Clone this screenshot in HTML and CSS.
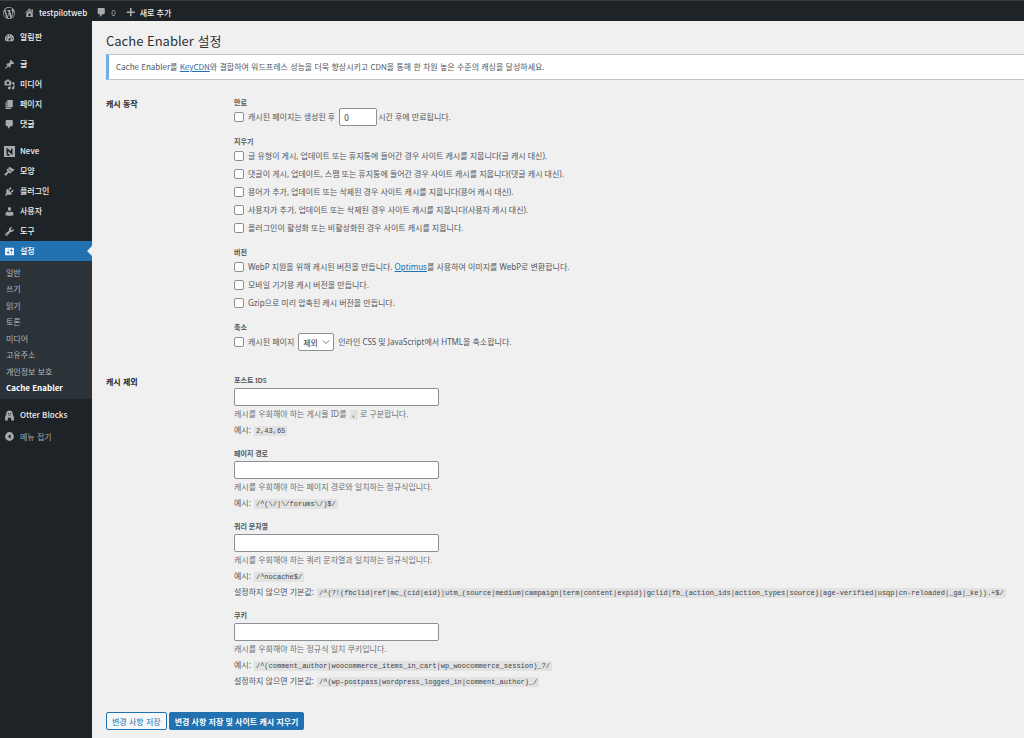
FILE: index.html
```html
<!DOCTYPE html>
<html lang="ko">
<head>
<meta charset="UTF-8">
<meta name="viewport" content="width=device-width, initial-scale=1.0">
<title>Cache Enabler 설정</title>
<link rel="stylesheet" href="styles.css">
</head>
<body>

<div class="adminbar">
  <a href="#" class="bar-logo" aria-label="WordPress"><svg class="icon logo" viewBox="0 0 20 20"><path d="M20 10c0-5.51-4.49-10-10-10C4.48 0 0 4.49 0 10c0 5.52 4.48 10 10 10 5.51 0 10-4.48 10-10zM7.78 15.37L4.37 6.22c.55-.02 1.17-.08 1.17-.08.5-.06.44-1.13-.06-1.11 0 0-1.45.11-2.37.11-.18 0-.37 0-.58-.01C4.12 2.69 6.87 1.11 10 1.11c2.33 0 4.45.87 6.05 2.34-.68-.11-1.65.39-1.65 1.58 0 .74.45 1.36.9 2.1.35.61.55 1.36.55 2.46 0 1.49-1.4 5-1.4 5l-3.03-8.37c.54-.02.82-.17.82-.17.5-.05.44-1.25-.06-1.22 0 0-1.44.12-2.38.12-.87 0-2.33-.12-2.33-.12-.5-.03-.56 1.2-.06 1.22l.92.08 1.26 3.41zM17.41 10c.24-.64.74-1.87.43-4.25.7 1.29 1.05 2.71 1.05 4.25 0 3.29-1.73 6.24-4.4 7.78.97-2.59 1.94-5.2 2.92-7.78zM6.1 18.09C3.12 16.65 1.11 13.53 1.11 10c0-1.3.23-2.48.72-3.59C3.25 10.3 4.67 14.2 6.1 18.09zm4.03-6.63l2.58 6.98c-.86.29-1.76.45-2.71.45-.79 0-1.57-.11-2.29-.33.81-2.38 1.62-4.74 2.42-7.1z"/></svg></a>
  <a href="#"><svg class="icon" viewBox="0 0 20 20"><path d="M16 8.5l1.53 1.53-1.06 1.06L10 4.6l-6.47 6.47-1.06-1.06L10 2.4l4 4V4h2v4.5zm-6-2.46l6 5.99V18H4v-5.97zM12 17v-5H8v5h4z"/></svg>testpilotweb</a>
  <a href="#" class="bar-comments"><svg class="icon" viewBox="0 0 20 20"><path d="M5 2h9c1.1 0 2 .9 2 2v7c0 1.1-.9 2-2 2h-2l-5 5v-5H5c-1.1 0-2-.9-2-2V4c0-1.1.9-2 2-2z"/></svg>0</a>
  <a href="#"><svg class="icon" viewBox="0 0 20 20"><path d="M18 8v3h-6v6H9v-6H3V8h6V2h3v6z"/></svg>새로 추가</a>
</div>

<div class="wrapper">
  <div class="sidebar">
    <ul class="menu">
      <li><a href="#"><svg class="icon" viewBox="0 0 20 20"><path fill-rule="evenodd" d="M3.8 17h12.4A8 8 0 1 0 3.8 17zM10 5.2a1 1 0 1 1 0 2 1 1 0 0 1 0-2zM6 7a1 1 0 1 1 0 2 1 1 0 0 1 0-2zm8.6.2l-3 5.6a1.9 1.9 0 1 1-1.3-1zM4.5 11a1 1 0 1 1 0 2 1 1 0 0 1 0-2zm11 0a1 1 0 1 1 0 2 1 1 0 0 1 0-2z"/></svg>알림판</a></li>
    </ul>
    <ul class="menu">
      <li><a href="#"><svg class="icon" viewBox="0 0 20 20"><path d="M10.44 3.02l1.82-1.82 6.36 6.35-1.83 1.82c-1.05-.68-2.48-.57-3.41.36l-.75.75c-.92.93-1.04 2.35-.35 3.41l-1.83 1.82-2.41-2.41-2.8 2.79c-.42.42-3.38 2.71-3.8 2.29s1.86-3.39 2.28-3.81l2.79-2.79L4.1 9.36l1.83-1.82c1.05.69 2.48.57 3.4-.36l.75-.75c.93-.92 1.05-2.35.36-3.41z"/></svg>글</a></li>
      <li><a href="#"><svg class="icon" viewBox="0 0 20 20"><path d="M13 11V4c0-.55-.45-1-1-1h-1.67L9 1H5L3.67 3H2c-.55 0-1 .45-1 1v7c0 .55.45 1 1 1h10c.55 0 1-.45 1-1zM7 4.5c1.38 0 2.5 1.12 2.5 2.5S8.38 9.5 7 9.5 4.5 8.38 4.5 7 5.62 4.5 7 4.5zM14 6h5v10.5c0 1.38-1.12 2.5-2.5 2.5S14 17.88 14 16.5s1.12-2.5 2.5-2.5c.17 0 .34.02.5.05V9h-3V6zm-4 8.05V13h2v3.5c0 1.38-1.12 2.5-2.5 2.5S7 17.88 7 16.5 8.12 14 9.5 14c.17 0 .34.02.5.05z"/></svg>미디어</a></li>
      <li><a href="#"><svg class="icon" viewBox="0 0 20 20"><path d="M6 15V2h10v13H6zm-1 1h8v2H3V5h2v11z"/></svg>페이지</a></li>
      <li><a href="#"><svg class="icon" viewBox="0 0 20 20"><path d="M5 2h9c1.1 0 2 .9 2 2v7c0 1.1-.9 2-2 2h-2l-5 5v-5H5c-1.1 0-2-.9-2-2V4c0-1.1.9-2 2-2z"/></svg>댓글</a></li>
    </ul>
    <ul class="menu">
      <li><a href="#"><svg class="icon" viewBox="0 0 20 20"><path d="M0 0h20v20H0z"/><path class="cut" d="M6 14V6l8 7V5M5 16h5"/></svg>Neve</a></li>
      <li><a href="#"><svg class="icon" viewBox="0 0 20 20"><path d="M14.48 11.06L7.41 3.99l1.5-1.5c.5-.56 2.3-.47 3.51.32 1.21.8 1.43 1.28 2.91 2.1 1.18.64 2.45 1.26 4.45.85zm-.71.71L6.7 4.7 4.93 6.47c-.39.39-.39 1.02 0 1.41l1.06 1.06c.39.39.39 1.03 0 1.42-.6.6-1.43 1.11-2.21 1.69-.35.26-.7.53-1.01.84C1.43 14.23.4 16.08 1.4 17.07c.99 1 2.84-.03 4.18-1.36.31-.31.58-.66.85-1.02.57-.78 1.08-1.61 1.69-2.21.39-.39 1.02-.39 1.41 0l1.06 1.06c.39.39 1.02.39 1.41 0z"/></svg>모양</a></li>
      <li><a href="#"><svg class="icon" viewBox="0 0 20 20"><path d="M13.11 4.36L9.87 7.6 8 5.73l3.24-3.24c.35-.34 1.05-.2 1.56.32.52.51.66 1.21.31 1.55zm-8 1.77l.91-1.12 9.01 9.01-1.19.84c-.71.71-2.63 1.16-3.82 1.16H6.14L4.9 17.26c-.59.59-1.54.59-2.12 0-.59-.58-.59-1.53 0-2.12l1.24-1.24v-3.88c0-1.13.4-3.19 1.09-3.89zm7.26 3.97l3.24-3.24c.34-.35 1.04-.21 1.55.31.52.51.66 1.21.31 1.55l-3.24 3.25z"/></svg>플러그인</a></li>
      <li><a href="#"><svg class="icon" viewBox="0 0 20 20"><path d="M10 9.25c-2.27 0-2.73-3.44-2.73-3.44C7 4.02 7.82 2 9.97 2c2.16 0 2.98 2.02 2.71 3.81 0 0-.41 3.44-2.68 3.44zm0 2.57L12.72 10c2.39 0 4.52 2.33 4.52 4.53v2.49s-3.65 1.13-7.24 1.13c-3.65 0-7.24-1.13-7.24-1.13v-2.49c0-2.25 1.94-4.48 4.47-4.48z"/></svg>사용자</a></li>
      <li><a href="#"><svg class="icon" viewBox="0 0 20 20"><path d="M16.68 9.77c-1.34 1.34-3.3 1.67-4.95.99l-5.41 6.52c-.99.99-2.59.99-3.58 0s-.99-2.59 0-3.57l6.52-5.42c-.68-1.65-.35-3.61.99-4.95 1.28-1.28 3.12-1.62 4.72-1.06l-2.89 2.89 2.82 2.82 2.86-2.87c.53 1.58.18 3.39-1.08 4.65zM3.81 16.21c.4.39 1.04.39 1.43 0 .4-.4.4-1.04 0-1.43-.39-.4-1.03-.4-1.43 0-.39.39-.39 1.03 0 1.43z"/></svg>도구</a></li>
      <li class="current"><a href="#"><svg class="icon" viewBox="0 0 20 20"><path d="M18 16V4c0-.55-.45-1-1-1H3c-.55 0-1 .45-1 1v12c0 .55.45 1 1 1h14c.55 0 1-.45 1-1zM8 11h1c.55 0 1 .45 1 1s-.45 1-1 1H8v1.500c0 .28-.22.5-.5.5s-.5-.22-.5-.5V13H6c-.55 0-1-.45-1-1s.45-1 1-1h1V5.500c0-.28.22-.5.5-.5s.5.22.5.5V11zm5-2h-1c-.55 0-1-.45-1-1s.45-1 1-1h1V5.500c0-.28.22-.5.5-.5s.5.22.5.5V7h1c.55 0 1 .45 1 1s-.45 1-1 1h-1v5.500c0 .28-.22.5-.5.5s-.5-.22-.5-.5V9z"/></svg>설정</a></li>
    </ul>
    <ul class="submenu">
      <li><a href="#">일반</a></li>
      <li><a href="#">쓰기</a></li>
      <li><a href="#">읽기</a></li>
      <li><a href="#">토론</a></li>
      <li><a href="#">미디어</a></li>
      <li><a href="#">고유주소</a></li>
      <li><a href="#">개인정보 보호</a></li>
      <li><a href="#" class="active">Cache Enabler</a></li>
    </ul>
    <ul class="menu">
      <li><a href="#"><svg class="icon" viewBox="0 0 20 20"><path fill-rule="evenodd" d="M4 7C4 3 6.500 1 10 1s6 2 6 6v2c1.500 1.500 2 3 2 5v5h-5v-5H7v5H2v-5c0-2 .5-3.500 2-5zm3-1.500v2h2v-2zm4 0v2h2v-2zM8 9.500l2 2 2-2z"/></svg>Otter Blocks</a></li>
    </ul>
    <button type="button" class="collapse"><svg class="icon" viewBox="0 0 20 20"><path fill-rule="evenodd" d="M10 2a8 8 0 1 1 0 16 8 8 0 0 1 0-16zm2 4l-5 4 5 4z"/></svg>메뉴 접기</button>
  </div>

  <div class="content">
    <h1>Cache Enabler 설정</h1>
    <div class="notice">
      <p>Cache Enabler를 <a href="#">KeyCDN</a>와 결합하여 워드프레스 성능을 더욱 향상시키고 CDN을 통해 한 차원 높은 수준의 캐싱을 달성하세요.</p>
    </div>

    <form>
      <div class="section">
        <h2>캐시 동작</h2>
        <div class="fields">
          <div class="group">
            <h3>만료</h3>
            <div class="row">
              <input type="checkbox" id="expires"><label for="expires">캐시된 페이지는 생성된 후</label>
              <input type="text" class="hours" id="hours" value="0"><label for="hours">시간 후에 만료됩니다.</label>
            </div>
          </div>
          <div class="group">
            <h3>지우기</h3>
            <div class="row"><input type="checkbox" id="c1"><label for="c1">글 유형이 게시, 업데이트 또는 휴지통에 들어간 경우 사이트 캐시를 지웁니다(글 캐시 대신).</label></div>
            <div class="row"><input type="checkbox" id="c2"><label for="c2">댓글이 게시, 업데이트, 스팸 또는 휴지통에 들어간 경우 사이트 캐시를 지웁니다(댓글 캐시 대신).</label></div>
            <div class="row"><input type="checkbox" id="c3"><label for="c3">용어가 추가, 업데이트 또는 삭제된 경우 사이트 캐시를 지웁니다(용어 캐시 대신).</label></div>
            <div class="row"><input type="checkbox" id="c4"><label for="c4">사용자가 추가, 업데이트 또는 삭제된 경우 사이트 캐시를 지웁니다(사용자 캐시 대신).</label></div>
            <div class="row"><input type="checkbox" id="c5"><label for="c5">플러그인이 활성화 또는 비활성화된 경우 사이트 캐시를 지웁니다.</label></div>
          </div>
          <div class="group">
            <h3>버전</h3>
            <div class="row"><input type="checkbox" id="v1"><label for="v1">WebP 지원을 위해 캐시된 버전을 만듭니다. <a href="#">Optimus</a>를 사용하여 이미지를 WebP로 변환합니다.</label></div>
            <div class="row"><input type="checkbox" id="v2"><label for="v2">모바일 기기용 캐시 버전을 만듭니다.</label></div>
            <div class="row"><input type="checkbox" id="v3"><label for="v3">Gzip으로 미리 압축된 캐시 버전을 만듭니다.</label></div>
          </div>
          <div class="group">
            <h3>축소</h3>
            <div class="row">
              <input type="checkbox" id="minify"><label for="minify">캐시된 페이지</label>
              <span class="select-box">
                <select id="inline"><option>제외</option><option>포함</option></select>
                <svg viewBox="0 0 10 10"><path d="M1 3l4 4 4-4"/></svg>
              </span>
              <label for="inline">인라인 CSS 및 JavaScript에서 HTML을 축소합니다.</label>
            </div>
          </div>
        </div>
      </div>

      <div class="section">
        <h2>캐시 제외</h2>
        <div class="fields">
          <div class="group">
            <h3><label for="ids">포스트 IDS</label></h3>
            <input type="text" class="regular" id="ids">
            <p class="description">캐시를 우회해야 하는 게시물 ID를 <code>,</code> 로 구분합니다.</p>
            <p>예시: <code>2,43,65</code></p>
          </div>
          <div class="group">
            <h3><label for="paths">페이지 경로</label></h3>
            <input type="text" class="regular" id="paths">
            <p class="description">캐시를 우회해야 하는 페이지 경로와 일치하는 정규식입니다.</p>
            <p>예시: <code>/^(\/|\/forums\/)$/</code></p>
          </div>
          <div class="group">
            <h3><label for="query">쿼리 문자열</label></h3>
            <input type="text" class="regular" id="query">
            <p class="description">캐시를 우회해야 하는 쿼리 문자열과 일치하는 정규식입니다.</p>
            <p>예시: <code>/^nocache$/</code></p>
            <p>설정하지 않으면 기본값: <code>/^(?!(fbclid|ref|mc_(cid|eid)|utm_(source|medium|campaign|term|content|expid)|gclid|fb_(action_ids|action_types|source)|age-verified|usqp|cn-reloaded|_ga|_ke)).+$/</code></p>
          </div>
          <div class="group">
            <h3><label for="cookies">쿠키</label></h3>
            <input type="text" class="regular" id="cookies">
            <p class="description">캐시를 우회해야 하는 정규식 일치 쿠키입니다.</p>
            <p>예시: <code>/^(comment_author|woocommerce_items_in_cart|wp_woocommerce_session)_?/</code></p>
            <p>설정하지 않으면 기본값: <code>/^(wp-postpass|wordpress_logged_in|comment_author)_/</code></p>
          </div>
        </div>
      </div>

      <div class="buttons">
        <button type="submit" class="button">변경 사항 저장</button>
        <button type="submit" class="button primary">변경 사항 저장 및 사이트 캐시 지우기</button>
      </div>
    </form>
  </div>
</div>

</body>
</html>
```

FILE: styles.css
```css
* {
  box-sizing: border-box;
}

body {
  margin: 0;
  min-height: 100vh;
  display: flex;
  flex-direction: column;
  font-family: "Noto Sans CJK KR", sans-serif;
  font-size: 8px;
  line-height: 16px;
  color: #50565c;
  background-color: #f0f0f0;
}

h1, h2, h3, p, ul {
  margin: 0;
  padding: 0;
}

ul {
  list-style: none;
}

a {
  color: #2271b1;
}

input, select, button {
  font-family: inherit;
  font-size: 8px;
  margin: 0;
}

.icon {
  width: 11px;
  height: 11px;
  flex: none;
  fill: #a7aaad;
}

/* top bar */
.adminbar {
  display: flex;
  align-items: center;
  gap: 9px;
  height: 21px;
  padding: 3px 3px 0;
  background-color: #1d2327;
  border-top: 1px solid #3a3f45;
}

.adminbar a {
  display: flex;
  align-items: center;
  gap: 4px;
  color: #f0f0f1;
  font-weight: 500;
  text-decoration: none;
}

.adminbar .bar-comments {
  color: #a7aaad;
  font-weight: 400;
}

.icon.logo {
  width: 12px;
  height: 12px;
}

.wrapper {
  display: flex;
  flex: 1;
}

/* left menu */
.sidebar {
  width: 92px;
  flex: none;
  padding-top: 6px;
  background-color: #1d2327;
}

.menu {
  margin-bottom: 7px;
}

.menu a,
.collapse {
  display: flex;
  align-items: center;
  gap: 5px;
  height: 20px;
  padding: 0 4px;
  color: #f0f0f1;
  font-weight: 500;
  text-decoration: none;
}

.cut {
  fill: none;
  stroke: #1d2327;
  stroke-width: 3;
}

.current {
  position: relative;
  background-color: #2271b1;
}

.current a {
  color: #fff;
}

.current .icon {
  fill: #fff;
}

.current::after {
  content: "";
  position: absolute;
  right: 0;
  top: 5px;
  border: 5px solid transparent;
  border-left: 0;
  border-right-color: #f0f0f0;
}

.submenu {
  display: flex;
  flex-direction: column;
  justify-content: space-between;
  height: 138px;
  margin: -7px 0 6px;
  padding: 4px 6px 3px;
  background-color: #2c3338;
}

.submenu a {
  display: block;
  color: #b5b9bd;
  text-decoration: none;
}

.submenu .active {
  color: #fff;
  font-weight: 600;
}

.collapse {
  width: 100%;
  margin-top: -6px;
  border: 0;
  background: none;
  color: #a7aaad;
  font-weight: 400;
}

/* settings page */
.content {
  flex: 1;
  min-width: 0;
  padding: 10px 0 8px 14px;
}

h1 {
  font-size: 13px;
  line-height: 20px;
  font-weight: 400;
  color: #2c3338;
}

.notice {
  margin-top: 3px;
  padding: 4px 7px;
  background-color: #fff;
  border: 1px solid #c3c4c7;
  border-left: 3px solid #72aee6;
  border-right: 0;
}

.section {
  display: flex;
  margin-top: 25px;
}

form .section:first-child {
  margin-top: 18px;
}

h2 {
  width: 128px;
  flex: none;
  font-size: 8px;
  line-height: 12px;
  font-weight: 600;
  color: #1d2327;
}

.fields {
  display: flex;
  flex-direction: column;
  gap: 11px;
  flex: 1;
  min-width: 0;
  font-family: "Noto Sans", "Noto Sans CJK KR", sans-serif;
}

h3 {
  font-size: 7px;
  line-height: 10px;
  font-weight: 600;
}

.row {
  display: flex;
  align-items: center;
  gap: 4px;
  height: 18px;
}

input[type="checkbox"] {
  appearance: none;
  width: 10px;
  height: 10px;
  border: 1px solid #8c8f94;
  border-radius: 2px;
  background-color: #fff;
}

input[type="text"] {
  height: 18px;
  padding: 0 4px;
  border: 1px solid #8c8f94;
  border-radius: 2px;
  background-color: #fff;
  color: #2c3338;
}

.hours {
  width: 38px;
}

.hours + label {
  margin-left: -3px;
}

.regular {
  display: block;
  width: 205px;
  margin-top: 2px;
}

.select-box {
  position: relative;
}

.select-box select {
  display: block;
  appearance: none;
  width: 36px;
  height: 18px;
  padding: 0 4px;
  border: 1px solid #8c8f94;
  border-radius: 2px;
  background-color: #fff;
  color: #2c3338;
}

.select-box svg {
  position: absolute;
  right: 4px;
  top: 5px;
  width: 8px;
  height: 8px;
  fill: none;
  stroke: #50575e;
  stroke-width: 1;
  pointer-events: none;
}

.group p {
  height: 16px;
  white-space: nowrap;
}

.group .description {
  color: #6b7177;
}

code {
  margin-left: 1px;
  padding: 1px 2px;
  font-family: "Liberation Mono", monospace;
  font-size: 7px;
  color: #3c434a;
  background-color: #e2e2e3;
}

.buttons {
  display: flex;
  gap: 2px;
  margin-top: 23px;
}

.button {
  height: 18px;
  padding: 0 5px;
  border: 1px solid #2271b1;
  border-radius: 2px;
  background-color: #f6f7f7;
  color: #2271b1;
}

.primary {
  background-color: #2271b1;
  color: #fff;
  font-weight: 600;
}
```
